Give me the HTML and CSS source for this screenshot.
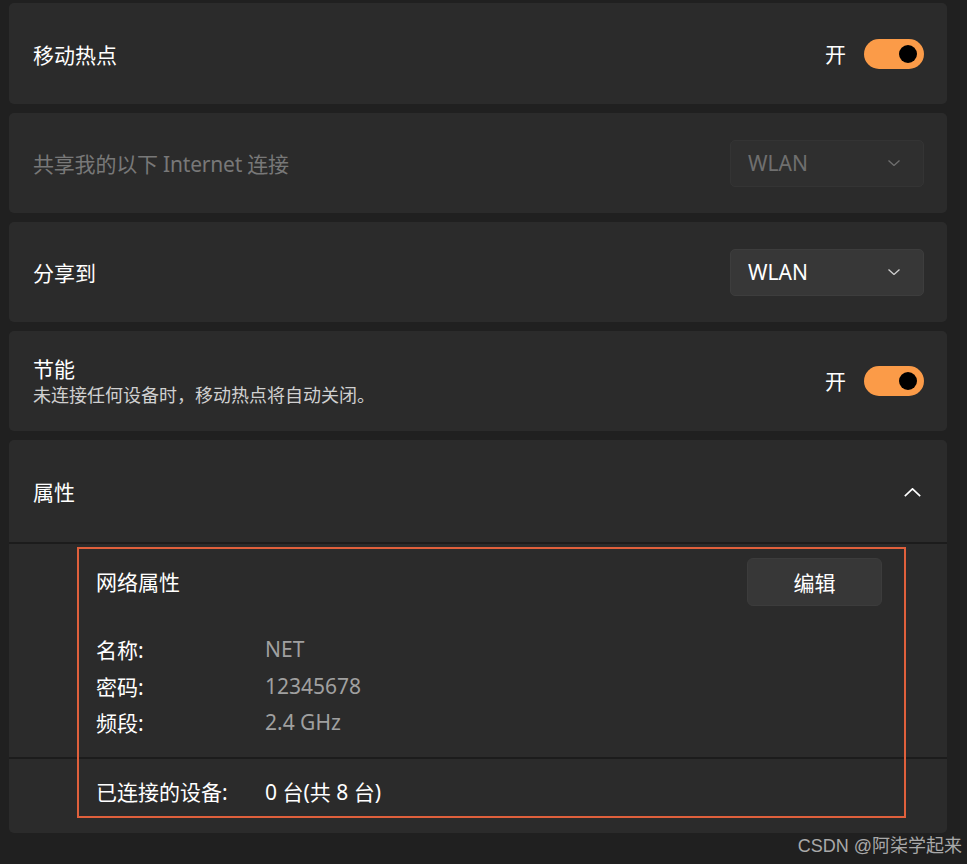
FILE: index.html
```html
<!DOCTYPE html>
<html lang="zh-CN">
<head>
    <meta charset="UTF-8">
    <meta name="viewport" content="width=device-width, initial-scale=1.0">
    <title>移动热点</title>
    <link rel="stylesheet" href="styles.css">
</head>
<body>
    <div class="page">
        <div class="card">
            <div class="card-title">移动热点</div>
            <div class="switch-box">
                <span class="switch-label">开</span>
                <div class="switch on"><div class="knob"></div></div>
            </div>
        </div>

        <div class="card">
            <div class="card-title disabled">共享我的以下 Internet 连接</div>
            <div class="select disabled">
                <span>WLAN</span>
                <svg class="chevron" viewBox="0 0 12 6"><path d="M0.5 0.5 L6 5.5 L11.5 0.5"/></svg>
            </div>
        </div>

        <div class="card">
            <div class="card-title">分享到</div>
            <div class="select">
                <span>WLAN</span>
                <svg class="chevron" viewBox="0 0 12 6"><path d="M0.5 0.5 L6 5.5 L11.5 0.5"/></svg>
            </div>
        </div>

        <div class="card">
            <div class="card-text">
                <div class="card-title">节能</div>
                <div class="card-desc">未连接任何设备时，移动热点将自动关闭。</div>
            </div>
            <div class="switch-box">
                <span class="switch-label">开</span>
                <div class="switch on"><div class="knob"></div></div>
            </div>
        </div>

        <div class="expander">
            <div class="expander-head">
                <div class="card-title">属性</div>
                <svg class="chevron-up" viewBox="0 0 17 9"><path d="M0.8 8.2 L8.5 0.8 L16.2 8.2"/></svg>
            </div>
            <div class="expander-body">
                <div class="body-top">
                    <div class="section-title">网络属性</div>
                    <button class="btn">编辑</button>
                </div>
                <div class="fields">
                    <div class="field"><span class="field-name">名称:</span><span class="field-value">NET</span></div>
                    <div class="field"><span class="field-name">密码:</span><span class="field-value">12345678</span></div>
                    <div class="field"><span class="field-name">频段:</span><span class="field-value">2.4 GHz</span></div>
                </div>
            </div>
            <div class="expander-foot">
                <span class="field-name">已连接的设备:</span>
                <span class="foot-value">0 台(共 8 台)</span>
            </div>
            <div class="highlight"></div>
        </div>
    </div>

    <div class="watermark">CSDN @阿柒学起来</div>
</body>
</html>
```

FILE: styles.css
```css
* {
    margin: 0;
    padding: 0;
    box-sizing: border-box;
}

body {
    font-family: "Noto Sans", "Noto Sans CJK SC", sans-serif;
    background: #202020;
    color: #ffffff;
    width: 967px;
    height: 864px;
    overflow: hidden;
    position: relative;
}

.page {
    padding: 3px 0 0 9px;
    width: 947px;
    display: flex;
    flex-direction: column;
    gap: 9px;
}

.card {
    height: 100px;
    background: #2b2b2b;
    border-radius: 5px;
    display: flex;
    align-items: center;
    justify-content: space-between;
    padding: 2px 23px 0 24px;
}

.card:first-child {
    height: 101px;
}

.card-title {
    font-size: 21px;
    line-height: 26px;
    color: #ffffff;
}

.card-title.disabled {
    color: #787878;
    letter-spacing: -0.2px;
}

.card-desc {
    font-size: 18px;
    line-height: 26px;
    color: #d0d0d0;
}

.card-text {
    display: flex;
    flex-direction: column;
}

.switch-box {
    display: flex;
    align-items: center;
    gap: 18px;
    margin-top: -2px;
}

.switch-label {
    font-size: 21px;
    line-height: 26px;
}

.switch {
    width: 60px;
    height: 30px;
    border-radius: 15px;
    background: #fb9b48;
    display: flex;
    align-items: center;
    justify-content: flex-end;
    padding-right: 7px;
}

.knob {
    width: 18px;
    height: 18px;
    border-radius: 50%;
    background: #000000;
}

.select {
    width: 194px;
    height: 47px;
    margin-top: -2px;
    border-radius: 5px;
    background: #373737;
    border: 1px solid #3d3d3d;
    display: flex;
    align-items: center;
    justify-content: space-between;
    padding: 0 23px 0 17px;
    font-size: 21px;
    color: #ffffff;
}

.select.disabled {
    background: #2f2f2f;
    border-color: #343434;
    color: #6f6f6f;
}

.chevron {
    width: 12px;
    height: 6px;
    fill: none;
    stroke: #cfcfcf;
    stroke-width: 1.3;
}

.select.disabled .chevron {
    stroke: #6f6f6f;
}

.expander {
    position: relative;
    background: #2b2b2b;
    border-radius: 5px;
}

.expander-head {
    height: 104px;
    display: flex;
    align-items: center;
    justify-content: space-between;
    padding: 2px 26px 0 24px;
    border-bottom: 2px solid #1c1c1c;
}

.chevron-up {
    width: 17px;
    height: 9px;
    fill: none;
    stroke: #ffffff;
    stroke-width: 1.6;
}

.expander-body {
    height: 215px;
    padding: 14px 65px 0 87px;
    border-bottom: 2px solid #1c1c1c;
}

.body-top {
    display: flex;
    align-items: center;
    justify-content: space-between;
}

.section-title {
    font-size: 21px;
    line-height: 26px;
}

.btn {
    width: 135px;
    height: 48px;
    border-radius: 6px;
    background: #373737;
    border: 1px solid #3c3c3c;
    color: #ffffff;
    font-family: inherit;
    font-size: 21px;
}

.fields {
    margin-top: 25px;
}

.field {
    height: 36.5px;
    display: flex;
    align-items: center;
    font-size: 21px;
}

.field-name {
    width: 169px;
    flex-shrink: 0;
    color: #ffffff;
}

.field-value {
    color: #a0a0a0;
}

.expander-foot {
    height: 74px;
    display: flex;
    align-items: center;
    padding: 0 0 10px 87px;
    font-size: 21px;
}

.foot-value {
    color: #ffffff;
}

.highlight {
    position: absolute;
    left: 68px;
    top: 107px;
    width: 829px;
    height: 271px;
    border: 2px solid #e0603c;
    pointer-events: none;
}

.watermark {
    position: absolute;
    right: 5px;
    bottom: 7px;
    font-family: "Liberation Sans", "Noto Sans CJK SC", sans-serif;
    font-size: 18px;
    color: #a9a9a9;
}
```
